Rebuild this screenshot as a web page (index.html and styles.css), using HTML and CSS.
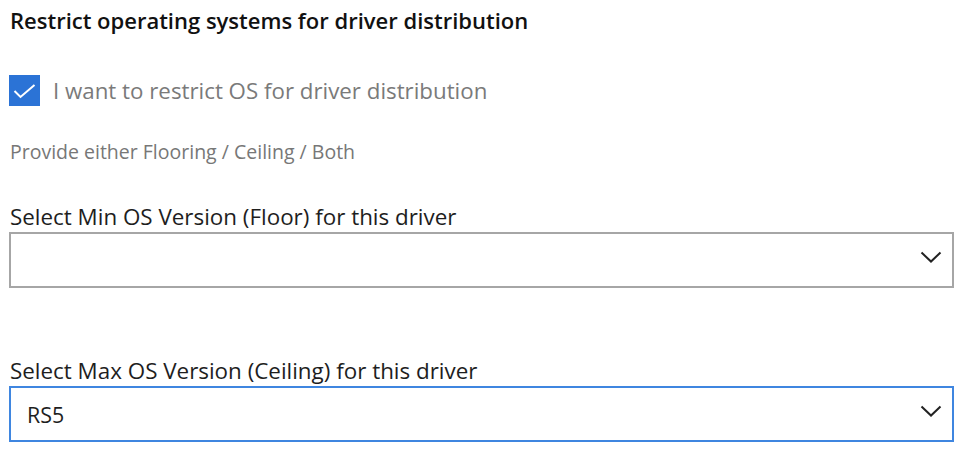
FILE: index.html
```html
<!DOCTYPE html>
<html>
<head>
<meta charset="utf-8">
<link rel="stylesheet" href="styles.css">
</head>
<body>
<div class="form">
  <h2 class="title">Restrict operating systems for driver distribution</h2>
  <label class="check">
    <span class="box"><svg width="31" height="31" viewBox="0 0 31 31"><path d="M5.5 16 L11.5 22 L25.5 10" fill="none" stroke="#fff" stroke-width="2"/></svg></span>
    <span class="check-label">I want to restrict OS for driver distribution</span>
  </label>
  <p class="hint">Provide either Flooring / Ceiling / Both</p>
  <div class="field field-min">
    <div class="label">Select Min OS Version (Floor) for this driver</div>
    <div class="select">
      <span class="value"></span>
      <svg class="chev" width="22" height="12" viewBox="0 0 22 12"><path d="M1.5 1.5 L11 10.5 L20.5 1.5" fill="none" stroke="#222" stroke-width="2"/></svg>
    </div>
  </div>
  <div class="field field-max">
    <div class="label">Select Max OS Version (Ceiling) for this driver</div>
    <div class="select focused">
      <span class="value">RS5</span>
      <svg class="chev" width="22" height="12" viewBox="0 0 22 12"><path d="M1.5 1.5 L11 10.5 L20.5 1.5" fill="none" stroke="#222" stroke-width="2"/></svg>
    </div>
  </div>
</div>
</body>
</html>
```
FILE: styles.css
```css
html, body { margin: 0; padding: 0; background: #fff; }
body { font-family: "Open Sans", "Noto Sans", sans-serif; color: #222; }
.form { display: flex; flex-direction: column; padding: 5px 14px 0 9px; width: 945px; }
.title { margin: 0 0 0 1px; font-size: 22px; font-weight: 600; line-height: 30px; color: #111; }
.check { display: flex; align-items: center; gap: 13px; margin-top: 40px; height: 31px; }
.box { width: 31px; height: 31px; background: #2b73d6; display: block; flex: none; }
.box svg { display: block; }
.check-label { font-size: 22.3px; color: #7a7a7a; white-space: nowrap; }
.hint { margin: 33px 0 0 1px; font-size: 19.5px; color: #777; line-height: 26px; }
.field { display: flex; flex-direction: column; }
.field-min { margin-top: 37px; }
.field-max { margin-top: 68px; }
.label { font-size: 22.4px; line-height: 30px; margin-left: 1px; color: #1e1e1e; white-space: nowrap; }
.select { height: 56px; box-sizing: border-box; border: 2px solid #a6a6a6; display: flex; align-items: center; justify-content: space-between; padding: 0 10px 0 16px; }
.select.focused { border-color: #3f86e0; }
.value { font-size: 21.4px; color: #1e1e1e; }
.chev { display: block; margin-bottom: 6px; }
```
